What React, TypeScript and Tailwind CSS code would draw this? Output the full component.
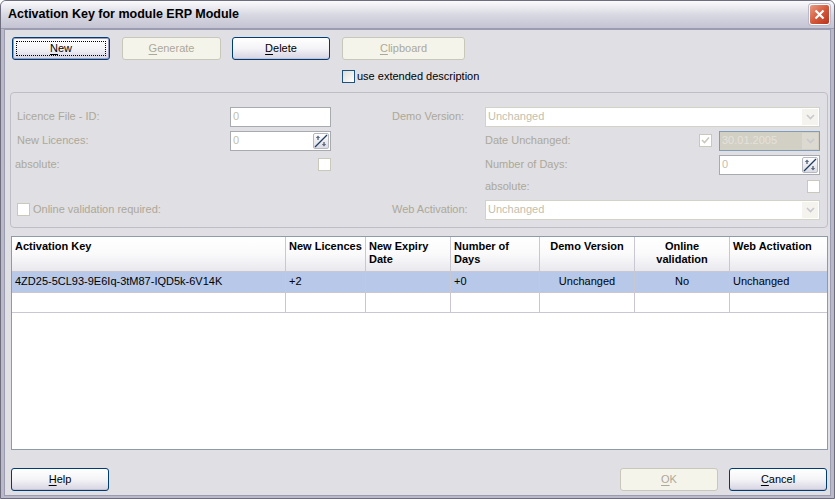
import React from 'react';

const font = "font-['Liberation_Sans',Arial,sans-serif]";

function Mnemonic({ text, u = 0 }: { text: string; u?: number }) {
  return (
    <span>
      {text.slice(0, u)}
      <span className="underline underline-offset-2">{text[u]}</span>
      {text.slice(u + 1)}
    </span>
  );
}

function XpButton({ label, u = 0, disabled, isDefault, w }: { label: string; u?: number; disabled?: boolean; isDefault?: boolean; w: string }) {
  if (disabled) {
    return (
      <div className={`${w} h-[23px] flex items-center justify-center rounded-[3px] border border-[#c9c7ba] bg-[#f5f4ea] text-[11px] text-[#aca899]`}>
        <Mnemonic text={label} u={u} />
      </div>
    );
  }
  return (
    <div
      className={`${w} relative h-[23px] flex items-center justify-center rounded-[3px] border border-[#003c74] bg-gradient-to-b from-white via-[#f4f4f7] to-[#d6d4e2] text-[11px] text-black ${
        isDefault ? 'shadow-[inset_0_0_0_1px_#9d9ec4]' : 'shadow-[inset_0_-1px_0_#c3c1d2]'
      }`}
    >
      {isDefault && <span className="absolute inset-[3px] border border-dotted border-black" />}
      <Mnemonic text={label} u={u} />
    </div>
  );
}

function Check({ disabled, checked }: { disabled?: boolean; checked?: boolean }) {
  return (
    <div
      className={`w-[13px] h-[13px] shrink-0 flex items-center justify-center border ${
        disabled ? 'border-[#cac8bb] bg-white' : 'border-[#1c5180] bg-gradient-to-br from-[#dcdcd7] to-white'
      }`}
    >
      {checked && (
        <svg width="9" height="9" viewBox="0 0 9 9">
          <path d="M1 4 L3.5 6.5 L8 1.5" fill="none" stroke={disabled ? '#cac8bb' : '#21a121'} strokeWidth="1.6" />
        </svg>
      )}
    </div>
  );
}

function SpinIcon() {
  return (
    <div className="w-[16px] h-[16px] shrink-0 rounded-[2px] border border-[#b5b8c0] bg-gradient-to-b from-white to-[#dcdbe3]">
      <svg width="14" height="14" viewBox="0 0 14 14">
        <line x1="1" y1="13" x2="13" y2="1" stroke="#1d3a5f" strokeWidth="1.2" />
        <path d="M4 1.5 L1.8 4 H3.3 V6 H4.7 V4 H6.2 Z" fill="#5a6a80" />
        <path d="M10 12.5 L7.8 10 H9.3 V8 H10.7 V10 H12.2 Z" fill="#5a6a80" />
      </svg>
    </div>
  );
}

function Edit({ value, w, spin }: { value: string; w: string; spin?: boolean }) {
  return (
    <div className={`${w} h-[20px] flex items-center justify-between border border-[#a7abb0] bg-white pl-[2px] pr-[1px] text-[11px] text-[#c2bfae]`}>
      <span>{value}</span>
      {spin && <SpinIcon />}
    </div>
  );
}

function Chevron() {
  return (
    <svg width="9" height="6" viewBox="0 0 9 6">
      <path d="M1 1 L4.5 4.5 L8 1" fill="none" stroke="#c9c8cf" strokeWidth="1.6" />
    </svg>
  );
}

function Combo({ value, w, grey }: { value: string; w: string; grey?: boolean }) {
  return (
    <div
      className={`${w} h-[20px] flex items-center justify-between border pl-[2px] pr-[1px] text-[11px] ${
        grey ? 'border-[#7f9db9] bg-[#d2cfc5] text-[#e4e2da]' : 'border-[#d4d2c6] bg-white text-[#c2bfae]'
      }`}
    >
      <span>{value}</span>
      <div className={`w-[16px] h-[16px] flex items-center justify-center ${grey ? 'bg-[#dcd9d0]' : 'bg-[#f4f3ee]'}`}>
        <Chevron />
      </div>
    </div>
  );
}

const label = 'text-[11px] text-[#aca899]';

const headers: { t: string[]; center?: boolean }[] = [
  { t: ['Activation Key'] },
  { t: ['New Licences'] },
  { t: ['New Expiry', 'Date'] },
  { t: ['Number of', 'Days'] },
  { t: ['Demo Version'], center: true },
  { t: ['Online', 'validation'], center: true },
  { t: ['Web Activation'] },
];

const row = ['4ZD25-5CL93-9E6Iq-3tM87-IQD5k-6V14K', '+2', '', '+0', 'Unchanged', 'No', 'Unchanged'];

export default function App() {
  return (
    <div className={`${font} w-[835px] h-[499px] flex flex-col border border-[#6d6d7e] bg-[#b9b9c9] rounded-t-[6px] overflow-hidden`}>
      {/* title bar */}
      <div className="h-[28px] shrink-0 flex items-center justify-between pl-[7px] pr-[4px] bg-gradient-to-b from-[#fbfbfd] via-[#d9d9e3] to-[#c3c3d3] border-b border-[#9c9cb0]">
        <span className="text-[12.5px] font-bold text-black">Activation Key for module ERP Module</span>
        <div className="w-[21px] h-[21px] rounded-[3px] border border-white bg-gradient-to-br from-[#e99a84] via-[#d45a3c] to-[#b8321a] shadow-[0_0_0_1px_#b9b9c9] flex items-center justify-center">
          <svg width="11" height="11" viewBox="0 0 11 11">
            <path d="M1.5 1.5 L9.5 9.5 M9.5 1.5 L1.5 9.5" stroke="white" strokeWidth="2.2" />
          </svg>
        </div>
      </div>

      {/* body */}
      <div className="flex-1 flex flex-col mx-[3px] mb-[3px] border border-[#9c9cb0] bg-[#e0dfe3] pl-[6px] pr-[2px] pt-[7px] pb-[4px]">
        {/* top buttons */}
        <div className="flex pl-[1px]">
          <XpButton label="New" w="w-[98px]" isDefault />
          <div className="w-[12px]" />
          <XpButton label="Generate" w="w-[99px]" disabled />
          <div className="w-[11px]" />
          <XpButton label="Delete" w="w-[98px]" />
          <div className="w-[12px]" />
          <XpButton label="Clipboard" w="w-[123px]" disabled />
        </div>
        <div className="flex items-center gap-[2px] pl-[331px] mt-[8px] text-[11px] text-black">
          <Check />
          <span>use extended description</span>
        </div>

        {/* group box */}
        <div className="mt-[7px] -ml-[1px] h-[136px] rounded-[4px] border border-[#bfbdc6] flex pl-[6px] pt-[14px]">
          {/* left column */}
          <div className="w-[314px] flex flex-col">
            <div className="h-[20px] flex items-center justify-between">
              <span className={label}>Licence File - ID:</span>
              <Edit value="0" w="w-[101px]" />
            </div>
            <div className="h-[20px] mt-[4px] flex items-center justify-between">
              <span className={label}>New Licences:</span>
              <Edit value="0" w="w-[101px]" spin />
            </div>
            <div className="h-[20px] mt-[4px] flex items-center justify-between -ml-[2px]">
              <span className={label}>absolute:</span>
              <Check disabled />
            </div>
            <div className="h-[17px] mt-[3px]" />
            <div className="h-[20px] mt-[5px] flex items-center gap-[3px]">
              <Check disabled />
              <span className={label}>Online validation required:</span>
            </div>
          </div>

          {/* right column */}
          <div className="w-[428px] ml-[61px] flex flex-col">
            <div className="h-[20px] flex items-center">
              <span className={`${label} w-[93px]`}>Demo Version:</span>
              <Combo value="Unchanged" w="w-[335px]" />
            </div>
            <div className="h-[20px] mt-[4px] flex items-center">
              <span className={`${label} w-[93px]`} />
              <span className={`${label} flex-1`}>Date Unchanged:</span>
              <Check disabled checked />
              <div className="w-[7px]" />
              <Combo value="30.01.2005" w="w-[101px]" grey />
            </div>
            <div className="h-[20px] mt-[4px] flex items-center">
              <span className={`${label} w-[93px]`} />
              <span className={`${label} flex-1`}>Number of Days:</span>
              <Edit value="0" w="w-[101px]" spin />
            </div>
            <div className="h-[17px] mt-[3px] flex items-center">
              <span className={`${label} w-[93px]`} />
              <span className={`${label} flex-1`}>absolute:</span>
              <Check disabled />
            </div>
            <div className="h-[20px] mt-[5px] flex items-center">
              <span className={`${label} w-[93px]`}>Web Activation:</span>
              <Combo value="Unchanged" w="w-[335px]" />
            </div>
          </div>
        </div>

        {/* table */}
        <div className="mt-[8px] h-[214px] border border-[#8e9aab] bg-white flex flex-col text-[11px]">
          <div className="grid grid-cols-[274px_80px_85px_89px_95px_95px_97px] h-[35px] bg-gradient-to-b from-white via-[#fafafb] to-[#e9e8ee] border-b border-[#c9c8d2]">
            {headers.map((h, i) => (
              <div
                key={i}
                className={`px-[3px] pt-[3px] font-bold text-black leading-[13px] ${h.center ? 'text-center' : ''} ${
                  i < 6 ? 'border-r border-[#c9c8d2]' : ''
                }`}
              >
                {h.t.map((l) => (
                  <div key={l}>{l}</div>
                ))}
              </div>
            ))}
          </div>
          <div className="grid grid-cols-[274px_80px_85px_89px_95px_95px_97px] h-[21px] bg-[#b7c8e8] border-b border-[#c9c8d2]">
            {row.map((c, i) => (
              <div
                key={i}
                className={`px-[3px] flex items-center text-black ${i === 4 || i === 5 ? 'justify-center' : ''} ${
                  i < 6 ? 'border-r border-[#c9c8d2]' : ''
                }`}
              >
                {c}
              </div>
            ))}
          </div>
          <div className="grid grid-cols-[274px_80px_85px_89px_95px_95px_97px] h-[20px] border-b border-[#c9c8d2]">
            {row.map((_, i) => (
              <div key={i} className={i < 6 ? 'border-r border-[#c9c8d2]' : ''} />
            ))}
          </div>
        </div>

        {/* bottom buttons */}
        <div className="mt-[18px] mr-[1px] flex items-center">
          <XpButton label="Help" w="w-[98px]" />
          <div className="flex-1" />
          <XpButton label="OK" w="w-[98px]" disabled />
          <div className="w-[11px]" />
          <XpButton label="Cancel" w="w-[98px]" />
        </div>
      </div>
    </div>
  );
}
